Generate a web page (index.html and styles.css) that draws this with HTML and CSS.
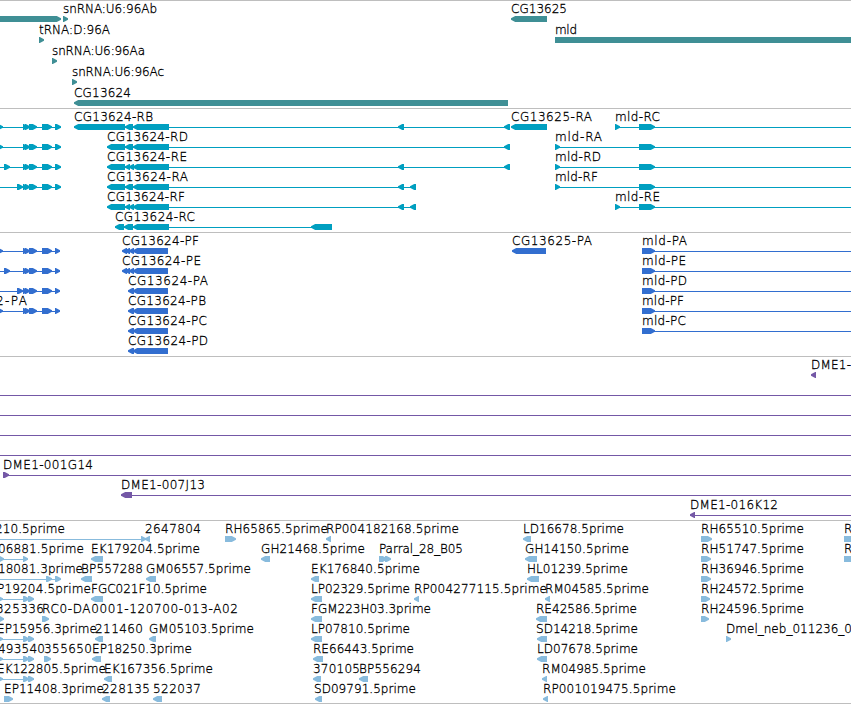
FILE: index.html
```html
<!DOCTYPE html>
<html lang="en">
<head>
<meta charset="utf-8">
<title>Genome tracks</title>
<link rel="stylesheet" href="styles.css">
</head>
<body>
<main class="browser" id="browser"></main>
<script src="tracks.js"></script>
</body>
</html>
```
FILE: styles.css
```css
body {
  margin: 0;
  background: #fff;
  overflow: hidden;
}

.browser {
  display: flex;
  flex-direction: column;
  width: 851px;
  height: 704px;
}

.track {
  box-sizing: border-box;
  flex: none;
  border-top: 1px solid #bebebe;
  overflow: hidden;
}

.track:last-child {
  border-bottom: 1px solid #bebebe;
}

.track svg {
  display: block;
  width: 851px;
  height: 100%;
}

.track text {
  font-family: "DejaVu Sans Light", "DejaVu Sans", sans-serif;
  font-weight: 200;
  font-size: 12px;
  fill: #000;
  stroke: #000;
  stroke-width: 0.3px;
}

.gene { color: #3f8f95; }
.transcript { color: #009fc0; }
.protein { color: #326ecf; }
.bac { color: #7458a6; }
.est { color: #88bbdd; }

.shape { fill: currentColor; }
```
FILE: tracks.js
```javascript
// Track contents.
// labels: [row, x start, x end, text]
// lines:  [row, x start, x end]
// shapes: [row, x start, x end, direction]; R right, L left, B plain bar
const END = 851;

function exonGroup(row, first, end) {
  return [first, [row, 23, 28, "R"], [row, 25, 30, "R"], [row, 29, 37, "R"],
    [row, 42, 52, "R"], [row, 55, end, "R"]];
}
function tailPair(row) {
  return [[row, 23, 29, "R"], [row, 28, 34, "R"]];
}

const tracks = [
  {
    name: "gene", height: 108, pitch: 21,
    lines: [],
    shapes: [[0, -9, 61, "R"], [0, 63, 68, "R"], [0, 511, 547, "L"], [1, 39, 44, "R"],
      [1, 555, END, "B"], [2, 52, 57, "R"], [3, 72, 77, "R"], [4, 74, 508, "L"]],
    labels: [[0, 63, 157, "snRNA:U6:96Ab"], [0, 511, 567, "CG13625"], [1, 39, 110, "tRNA:D:96A"],
      [1, 555, 577, "mld"], [2, 52, 145, "snRNA:U6:96Aa"], [3, 72, 164, "snRNA:U6:96Ac"],
      [4, 74, 131, "CG13624"]]
  },
  {
    name: "transcript", height: 124, pitch: 20,
    lines: [[0, 0, 61], [1, 0, 61], [2, 0, 61], [3, 0, 61],
      [0, 74, 510], [1, 107, 510], [2, 107, 510], [3, 107, 416], [4, 107, 416], [5, 115, 332],
      [0, 615, END], [1, 555, END], [2, 555, END], [3, 555, END], [4, 615, END]],
    shapes: [
      ...exonGroup(0, [0, -3, 3, "R"], 61), ...exonGroup(1, [1, -3, 3, "R"], 61),
      ...exonGroup(2, [2, 4, 10, "R"], 61), ...exonGroup(3, [3, 17, 23, "R"], 61),
      [0, 74, 125, "L"], [0, 125, 133, "L"], [0, 133, 169, "L"], [0, 398, 404, "L"], [0, 504, 510, "L"],
      [1, 107, 125, "L"], [1, 125, 133, "L"], [1, 133, 169, "L"], [1, 504, 510, "L"],
      [2, 107, 125, "L"], [2, 125, 130, "L"], [2, 129, 134, "L"], [2, 133, 169, "L"], [2, 398, 404, "L"], [2, 504, 510, "L"],
      [3, 107, 125, "L"], [3, 125, 133, "L"], [3, 133, 169, "L"], [3, 398, 404, "L"], [3, 410, 416, "L"],
      [4, 107, 125, "L"], [4, 125, 130, "L"], [4, 129, 134, "L"], [4, 133, 169, "L"], [4, 398, 404, "L"], [4, 410, 416, "L"],
      [5, 115, 124, "L"], [5, 124, 133, "L"], [5, 133, 169, "L"], [5, 311, 332, "L"],
      [0, 511, 547, "L"],
      [0, 615, 620, "R"], [1, 555, 560, "R"], [2, 555, 560, "R"], [3, 555, 560, "R"], [4, 615, 620, "R"],
      ...[0, 1, 2, 3, 4].map(r => [r, 639, 655, "R"])],
    labels: [[0, 74, 153, "CG13624-RB"], [1, 107, 188, "CG13624-RD"], [2, 107, 187, "CG13624-RE"],
      [3, 107, 188, "CG13624-RA"], [4, 107, 185, "CG13624-RF"], [5, 115, 195, "CG13624-RC"],
      [0, 511, 592, "CG13625-RA"], [0, 615, 660, "mld-RC"], [1, 555, 602, "mld-RA"],
      [2, 555, 601, "mld-RD"], [3, 555, 598, "mld-RF"], [4, 615, 660, "mld-RE"]]
  },
  {
    name: "protein", height: 124, pitch: 20,
    lines: [[0, 0, 60], [1, 0, 60], [2, 0, 60], [3, 0, 60],
      ...[0, 1, 2, 3, 4].map(r => [r, 642, END])],
    shapes: [
      ...exonGroup(0, [0, -3, 3, "R"], 60), ...exonGroup(1, [1, 4, 10, "R"], 60),
      ...exonGroup(2, [2, 17, 23, "R"], 60), ...exonGroup(3, [3, -3, 3, "R"], 60),
      ...[0, 1].flatMap(r => [[r, 122, 127, "L"], [r, 125, 130, "L"], [r, 129, 134, "L"], [r, 133, 168, "L"]]),
      ...[2, 3, 4, 5].flatMap(r => [[r, 128, 134, "L"], [r, 133, 168, "L"]]),
      [0, 512, 546, "L"],
      ...[0, 1, 2, 3, 4].map(r => [r, 642, 655, "R"])],
    labels: [[0, 122, 199, "CG13624-PF"], [1, 122, 201, "CG13624-PE"], [2, 128, 208, "CG13624-PA"],
      [3, 128, 206, "CG13624-PB"], [4, 128, 207, "CG13624-PC"], [5, 128, 208, "CG13624-PD"],
      [3, -4, 27, "2-PA"], [0, 512, 592, "CG13625-PA"], [0, 642, 687, "mld-PA"],
      [1, 642, 686, "mld-PE"], [2, 642, 687, "mld-PD"], [3, 642, 684, "mld-PF"], [4, 642, 686, "mld-PC"]]
  },
  {
    name: "bac", height: 164, pitch: 20,
    lines: [[1, 0, END], [2, 0, END], [3, 0, END], [4, 0, END], [5, 3, END], [6, 121, END], [7, 690, END]],
    shapes: [[0, 811, 816, "L"], [5, 3, 9, "R"], [6, 121, 132, "L"], [7, 690, 695, "L"]],
    labels: [[0, 811, 851, "DME1-"], [5, 3, 93, "DME1-001G14"], [6, 121, 205, "DME1-007J13"],
      [7, 690, 778, "DME1-016K12"]]
  },
  {
    name: "est", height: 184, pitch: 20,
    lines: [[0, 0, 150], [1, 0, 28], [2, 0, 61], [3, 0, 34], [5, 0, 34], [6, 0, 34], [7, 0, 34]],
    shapes: [
      [0, 141, 146, "R"], [0, 145, 150, "L"], [0, 225, 236, "R"], [0, 326, 331, "L"], [0, 523, 531, "L"], [0, 701, 712, "R"], [0, 844, 856, "R"],
      [1, -2, 4, "R"], [1, 23, 28, "R"], [1, 91, 103, "L"], [1, 261, 270, "L"], [1, 379, 387, "R"], [1, 385, 391, "R"], [1, 525, 537, "L"], [1, 701, 711, "R"], [1, 844, 856, "R"],
      [2, 46, 52, "R"], [2, 55, 61, "R"], [2, 81, 92, "L"], [2, 146, 156, "L"], [2, 311, 319, "L"], [2, 527, 539, "L"], [2, 701, 711, "R"],
      [3, -2, 3, "R"], ...tailPair(3), [3, 91, 103, "L"], [3, 311, 322, "L"], [3, 414, 419, "L"], [3, 545, 550, "L"], [3, 701, 710, "R"],
      [4, -2, 4, "R"], [4, 42, 49, "R"], [4, 311, 322, "L"], [4, 536, 547, "L"], [4, 701, 709, "R"],
      [5, -2, 3, "R"], ...tailPair(5), [5, 95, 103, "L"], [5, 149, 156, "L"], [5, 311, 322, "L"], [5, 537, 547, "L"], [5, 726, 731, "R"],
      [6, -2, 3, "R"], ...tailPair(6), [6, 44, 51, "R"], [6, 92, 101, "L"], [6, 313, 323, "L"], [6, 537, 547, "L"],
      [7, -2, 3, "R"], ...tailPair(7), [7, 104, 112, "L"], [7, 313, 321, "L"], [7, 359, 368, "L"], [7, 542, 547, "L"],
      [8, 4, 13, "R"], [8, 102, 110, "L"], [8, 153, 162, "L"], [8, 315, 322, "L"], [8, 543, 548, "L"]],
    labels: [
      [0, -5, 65, "210.5prime"], [0, 145, 201, "2647804"], [0, 225, 328, "RH65865.5prime"], [0, 326, 459, "RP004182168.5prime"], [0, 523, 624, "LD16678.5prime"], [0, 701, 804, "RH65510.5prime"], [0, 844, 852, "R"],
      [1, -2, 84, "06881.5prime"], [1, 91, 200, "EK179204.5prime"], [1, 261, 365, "GH21468.5prime"], [1, 379, 463, "Parral_28_B05"], [1, 525, 629, "GH14150.5prime"], [1, 701, 804, "RH51747.5prime"], [1, 844, 852, "R"],
      [2, -2, 83, "18081.3prime"], [2, 81, 143, "BP557288"], [2, 146, 251, "GM06557.5prime"], [2, 311, 420, "EK176840.5prime"], [2, 527, 628, "HL01239.5prime"], [2, 701, 804, "RH36946.5prime"],
      [3, -3, 91, "P19204.5prime"], [3, 91, 207, "FGC021F10.5prime"], [3, 311, 410, "LP02329.5prime"], [3, 414, 547, "RP004277115.5prime"], [3, 545, 649, "RM04585.5prime"], [3, 701, 804, "RH24572.5prime"],
      [4, -4, 44, "325336"], [4, 42, 238, "RC0-DA0001-120700-013-A02"], [4, 311, 431, "FGM223H03.3prime"], [4, 536, 637, "RE42586.5prime"], [4, 701, 804, "RH24596.5prime"],
      [5, -3, 97, "EP15956.3prime"], [5, 95, 143, "211460"], [5, 149, 254, "GM05103.5prime"], [5, 311, 410, "LP07810.5prime"], [5, 536, 638, "SD14218.5prime"], [5, 726, 852, "Dmel_neb_011236_0"],
      [6, -2, 45, "493540"], [6, 44, 92, "355650"], [6, 92, 192, "EP18250.3prime"], [6, 313, 414, "RE66443.5prime"], [6, 537, 638, "LD07678.5prime"],
      [7, -3, 106, "EK122805.5prime"], [7, 104, 213, "EK167356.5prime"], [7, 313, 360, "370105"], [7, 359, 421, "BP556294"], [7, 542, 646, "RM04985.5prime"],
      [8, 4, 104, "EP11408.3prime"], [8, 102, 150, "228135"], [8, 153, 201, "522037"], [8, 314, 416, "SD09791.5prime"], [8, 543, 676, "RP001019475.5prime"]]
  }
];

// Offsets inside a row, below the track's top border.
const TOP = 15, MID = 18, BASE = 12;

function outline(x1, x2, y, dir) {
  const tip = Math.min(5, x2 - x1) - 0.8;
  if (dir === "R") return `${x1},${y} ${x2 - tip},${y} ${x2},${y + 2.3} ${x2},${y + 3.7} ${x2 - tip},${y + 6} ${x1},${y + 6}`;
  if (dir === "L") return `${x2},${y} ${x1 + tip},${y} ${x1},${y + 2.3} ${x1},${y + 3.7} ${x1 + tip},${y + 6} ${x2},${y + 6}`;
  return `${x1},${y} ${x2},${y} ${x2},${y + 6} ${x1},${y + 6}`;
}

document.getElementById("browser").innerHTML = tracks.map(t => {
  const lines = t.lines.map(([r, a, b]) =>
    `<rect class="shape" x="${a}" y="${r * t.pitch + MID}" width="${b - a}" height="1"/>`).join("");
  const shapes = t.shapes.map(([r, a, b, d]) =>
    `<polygon class="shape" points="${outline(a, b, r * t.pitch + TOP, d)}"/>`).join("");
  const labels = t.labels.map(([r, a, b, s]) =>
    `<text x="${a}" y="${r * t.pitch + BASE}" textLength="${b - a}">${s}</text>`).join("");
  return `<section class="track ${t.name}" style="height:${t.height}px"><svg>${lines}${shapes}${labels}</svg></section>`;
}).join("");
```
